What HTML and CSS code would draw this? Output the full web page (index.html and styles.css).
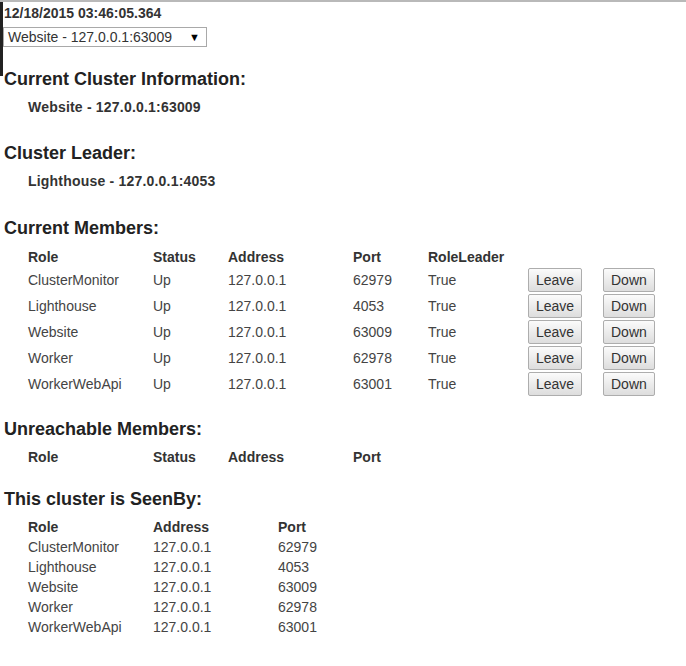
FILE: index.html
```html
<!DOCTYPE html>
<html>
<head>
<meta charset="utf-8">
<link rel="stylesheet" href="styles.css">
</head>
<body>
<div class="edge"></div>
<div class="page">
  <div class="stamp">12/18/2015 03:46:05.364</div>
  <div class="select"><span>Website - 127.0.0.1:63009</span><span class="arrow">▼</span></div>

  <h3 class="h first">Current Cluster Information:</h3>
  <div class="sub">Website - 127.0.0.1:63009</div>

  <h3 class="h after-sub">Cluster Leader:</h3>
  <div class="sub">Lighthouse - 127.0.0.1:4053</div>

  <h3 class="h after-sub2">Current Members:</h3>
  <table class="tbl members">
    <tr class="head"><th class="w125">Role</th><th class="w75">Status</th><th class="w125">Address</th><th class="w75">Port</th><th class="w100">RoleLeader</th><th class="w75"></th><th></th></tr>
    <tr><td>ClusterMonitor</td><td>Up</td><td>127.0.0.1</td><td>62979</td><td>True</td><td><button class="btn">Leave</button></td><td><button class="btn">Down</button></td></tr>
    <tr><td>Lighthouse</td><td>Up</td><td>127.0.0.1</td><td>4053</td><td>True</td><td><button class="btn">Leave</button></td><td><button class="btn">Down</button></td></tr>
    <tr><td>Website</td><td>Up</td><td>127.0.0.1</td><td>63009</td><td>True</td><td><button class="btn">Leave</button></td><td><button class="btn">Down</button></td></tr>
    <tr><td>Worker</td><td>Up</td><td>127.0.0.1</td><td>62978</td><td>True</td><td><button class="btn">Leave</button></td><td><button class="btn">Down</button></td></tr>
    <tr><td>WorkerWebApi</td><td>Up</td><td>127.0.0.1</td><td>63001</td><td>True</td><td><button class="btn">Leave</button></td><td><button class="btn">Down</button></td></tr>
  </table>

  <h3 class="h after-table">Unreachable Members:</h3>
  <table class="tbl tight">
    <tr class="head"><th class="w125">Role</th><th class="w75">Status</th><th class="w125">Address</th><th class="w75">Port</th></tr>
  </table>

  <h3 class="h after-table">This cluster is SeenBy:</h3>
  <table class="tbl tight seen">
    <tr class="head"><th class="w125">Role</th><th class="w125">Address</th><th class="w125">Port</th></tr>
    <tr><td>ClusterMonitor</td><td>127.0.0.1</td><td>62979</td></tr>
    <tr><td>Lighthouse</td><td>127.0.0.1</td><td>4053</td></tr>
    <tr><td>Website</td><td>127.0.0.1</td><td>63009</td></tr>
    <tr><td>Worker</td><td>127.0.0.1</td><td>62978</td></tr>
    <tr><td>WorkerWebApi</td><td>127.0.0.1</td><td>63001</td></tr>
  </table>
</div>
</body>
</html>
```

FILE: styles.css
```css
html, body {
  margin: 0;
  padding: 0;
  background: #fff;
}
body {
  border-top: 2px solid #b9b9b9;
  font-family: "Liberation Sans", Arial, sans-serif;
  font-size: 14px;
  color: #333;
  position: relative;
}
.edge {
  position: absolute;
  left: 0;
  top: -2px;
  width: 3px;
  height: 76px;
  background: #222;
}
.page {
  padding: 0 0 20px 4px;
}
.stamp {
  font-weight: bold;
  line-height: 16px;
  padding-top: 3px;
}
.select {
  margin-top: 6px;
  margin-left: -1px;
  height: 18px;
  border: 1px solid #a9a9a9;
  display: flex;
  align-items: center;
  justify-content: space-between;
  padding: 0 6px 0 4px;
  width: 192px;
  color: #333;
  line-height: 18px;
}
.select .arrow {
  font-size: 11px;
  color: #000;
}
.h {
  font-size: 18px;
  line-height: 22px;
  font-weight: bold;
  margin: 0;
  color: #222;
}
.h.first { margin-top: 21px; }
.h.after-sub { margin-top: 27px; }
.h.after-sub2 { margin-top: 28px; }
.h.after-table { margin-top: 21px; }
.sub {
  margin-top: 9px;
  padding-left: 24px;
  font-weight: bold;
  line-height: 16px;
  letter-spacing: 0.2px;
}
.tbl {
  border-collapse: collapse;
  margin-top: 8px;
  margin-left: 24px;
}
.tbl.tight { margin-top: 7px; }
.tbl th, .tbl td {
  padding: 0;
  text-align: left;
  vertical-align: middle;
}
.tbl th {
  font-weight: bold;
  height: 20px;
}
.tbl td {
  height: 26px;
  color: #444;
}
.seen td { height: 20px; }
.w125 { width: 125px; }
.w75 { width: 75px; }
.w100 { width: 100px; }
.btn {
  font-family: "Liberation Sans", Arial, sans-serif;
  font-size: 14px;
  color: #333;
  height: 24px;
  padding: 0 7px;
  border: 1px solid #adadad;
  border-radius: 2px;
  background: linear-gradient(#fbfbfb, #dddddd);
  display: block;
}
```
